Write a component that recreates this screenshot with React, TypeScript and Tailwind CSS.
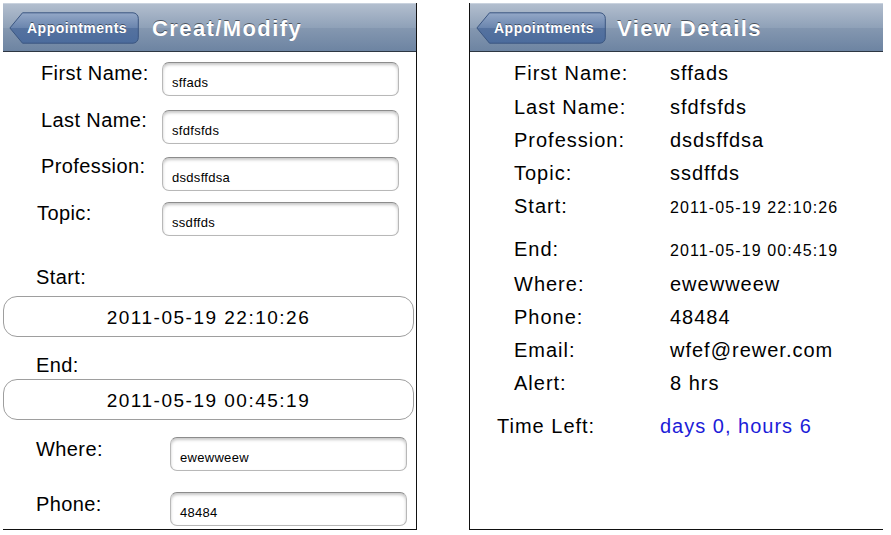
import React from "react";

const font = "font-['Liberation_Sans',Arial,Helvetica,sans-serif]";

function BackButton() {
  return (
    <div className="relative w-[130px] h-[32px] shrink-0">
      <svg className="absolute inset-0" width="130" height="32" viewBox="0 0 130 32">
        <defs>
          <linearGradient id="bb" x1="0" y1="0" x2="0" y2="1">
            <stop offset="0" stopColor="#94a8c7" />
            <stop offset="0.5" stopColor="#6a85ae" />
            <stop offset="0.5" stopColor="#55729f" />
            <stop offset="1" stopColor="#4c6c9d" />
          </linearGradient>
        </defs>
        <path
          d="M13.5,0.8 H124 A5.5,5.5 0 0 1 129.3,6.3 V25.7 A5.5,5.5 0 0 1 124,31.2 H13.5 L0.9,16 Z"
          fill="url(#bb)"
          stroke="#3b5680"
          strokeWidth="1"
        />
      </svg>
      <div className="relative flex h-full items-center pl-[18px] pt-[1px] text-[14px] font-bold tracking-[0.5px] text-white [text-shadow:0_-1px_0_rgba(0,0,0,0.45)]">
        Appointments
      </div>
    </div>
  );
}

function NavBar({ title, gap }: { title: string; gap: string }) {
  return (
    <div className="flex h-[49px] items-center border-b border-[#2d3642] border-t border-t-[#c9d2de] bg-[linear-gradient(to_bottom,#b2bece_0%,#8fa1b8_50%,#8497b0_52%,#6d84a2_100%)] pl-[6px] pt-[1px]">
      <BackButton />
      <div
        className={`${gap} text-[22px] font-bold tracking-[1.4px] text-white [text-shadow:0_-1px_0_rgba(0,0,0,0.5)]`}
      >
        {title}
      </div>
    </div>
  );
}

function Field({ value }: { value: string }) {
  return (
    <div className="h-[34px] w-[237px] rounded-[7px] border border-[#b8b8b8] border-t-[#8c8c8c] bg-white pl-[9px] pt-[12px] text-[13px] leading-[16px] tracking-[0.3px] text-black shadow-[inset_0_2px_3px_rgba(0,0,0,0.22)]">
      {value}
    </div>
  );
}

function DateBox({ value }: { value: string }) {
  return (
    <div className="flex h-[41px] w-[411px] items-center justify-center rounded-[14px] border border-[#9e9e9e] bg-white pt-[3px] text-[19px] leading-[22px] tracking-[1.5px] text-black">
      {value}
    </div>
  );
}

const labelCls = "text-[20px] leading-[24px] tracking-[0.4px] text-black";

function LeftPanel() {
  return (
    <div className="ml-[3px] h-[527px] w-[414px] shrink-0 border-r-[1.5px] border-b-[1.5px] border-[#111]">
      <NavBar title="Creat/Modify" gap="ml-[13px]" />
      <div className="flex flex-col">
        <div className="flex h-[55px]">
          <div className={`w-[159px] pl-[38px] pt-[9px] ${labelCls}`}>First Name:</div>
          <div className="mt-[10px]">
            <Field value="sffads" />
          </div>
        </div>
        <div className="flex h-[47px]">
          <div className={`w-[159px] pl-[38px] pt-[1px] ${labelCls}`}>Last Name:</div>
          <div className="mt-[3px]">
            <Field value="sfdfsfds" />
          </div>
        </div>
        <div className="flex h-[47px]">
          <div className={`w-[159px] pl-[38px] ${labelCls}`}>Profession:</div>
          <div className="mt-[3px]">
            <Field value="dsdsffdsa" />
          </div>
        </div>
        <div className="flex h-[64px]">
          <div className={`w-[159px] pl-[34px] ${labelCls}`}>Topic:</div>
          <div className="mt-[1px]">
            <Field value="ssdffds" />
          </div>
        </div>
        <div className={`pl-[33px] ${labelCls}`}>Start:</div>
        <div className="mt-[7px]">
          <DateBox value="2011-05-19 22:10:26" />
        </div>
        <div className={`mt-[16px] pl-[33px] ${labelCls}`}>End:</div>
        <div className="mt-[2px]">
          <DateBox value="2011-05-19 00:45:19" />
        </div>
        <div className="mt-[17px] flex h-[53px]">
          <div className={`w-[167px] pl-[33px] ${labelCls}`}>Where:</div>
          <div>
            <Field value="ewewweew" />
          </div>
        </div>
        <div className="flex">
          <div className={`w-[167px] pl-[33px] pt-[2px] ${labelCls}`}>Phone:</div>
          <div className="mt-[2px]">
            <Field value="48484" />
          </div>
        </div>
      </div>
    </div>
  );
}

type Row = { label: string; value: string; small?: boolean; h: string; mt?: string };

const rows: Row[] = [
  { label: "First Name:", value: "sffads", h: "h-[33.2px]" },
  { label: "Last Name:", value: "sfdfsfds", h: "h-[33.2px]" },
  { label: "Profession:", value: "dsdsffdsa", h: "h-[33.2px]" },
  { label: "Topic:", value: "ssdffds", h: "h-[33.2px]" },
  { label: "Start:", value: "2011-05-19 22:10:26", small: true, h: "h-[33.2px]" },
  { label: "End:", value: "2011-05-19 00:45:19", small: true, h: "h-[33.2px]", mt: "mt-[10px]" },
  { label: "Where:", value: "ewewweew", h: "h-[33.2px]", mt: "mt-[1.4px]" },
  { label: "Phone:", value: "48484", h: "h-[33px]" },
  { label: "Email:", value: "wfef@rewer.com", h: "h-[33px]" },
  { label: "Alert:", value: "8 hrs", h: "h-[33px]" },
];

function RightPanel() {
  return (
    <div className="ml-[52px] h-[527px] w-[414px] shrink-0 border-l-[1.5px] border-b-[1.5px] border-[#111]">
      <NavBar title="View Details" gap="ml-[11px]" />
      <div className="flex flex-col pt-[5.4px]">
        {rows.map((r) => (
          <div
            key={r.label}
            className={`flex items-baseline ${r.h} ${r.mt ?? ""} text-[20px] leading-[33.2px] tracking-[1px] text-black`}
          >
            <div className="w-[200px] shrink-0 pl-[44px]">{r.label}</div>
            <div className={r.small ? "text-[16px] tracking-[1.1px]" : ""}>{r.value}</div>
          </div>
        ))}
        <div className="mt-[9.7px] flex h-[33px] items-baseline text-[20px] leading-[33.2px] tracking-[1px]">
          <div className="w-[190px] shrink-0 pl-[27px] text-black">Time Left:</div>
          <div className="text-[#1c1cd8]">days 0, hours 6</div>
        </div>
      </div>
    </div>
  );
}

export default function App() {
  return (
    <div className={`${font} flex h-[535px] w-[891px] overflow-hidden bg-white pt-[3px]`}>
      <LeftPanel />
      <RightPanel />
    </div>
  );
}
